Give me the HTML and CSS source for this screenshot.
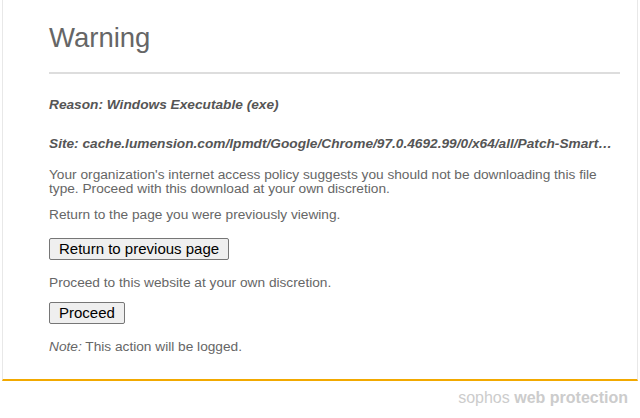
FILE: index.html
```html
<!DOCTYPE html>
<html lang="en">
<head>
    <meta charset="UTF-8">
    <title>Warning</title>
    <link rel="stylesheet" href="styles.css">
</head>
<body>
    <div class="panel">
        <h1>Warning</h1>
        <hr>
        <p class="detail">Reason: Windows Executable (exe)</p>
        <p class="detail site">Site: cache.lumension.com/lpmdt/Google/Chrome/97.0.4692.99/0/x64/all/Patch-SmartChromeUpdate.exe</p>
        <p class="policy">Your organization's internet access policy suggests you should not be downloading this file type. Proceed with this download at your own discretion.</p>
        <p>Return to the page you were previously viewing.</p>
        <button>Return to previous page</button>
        <p class="lead">Proceed to this website at your own discretion.</p>
        <button>Proceed</button>
        <p class="note"><em>Note:</em> This action will be logged.</p>
    </div>
    <div class="footer">sophos <b>web protection</b></div>
</body>
</html>
```

FILE: styles.css
```css
body {
    margin: 0 2px;
    font-family: "Liberation Sans", Arial, sans-serif;
    background-color: #fff;
    color: #666;
}
.panel {
    border: 1px solid #e8e8e8;
    border-top: none;
    border-bottom: 2px solid #f2a900;
    padding: 22px 17px 25px 46px;
}
h1 {
    font-size: 27.5px;
    line-height: 32px;
    font-weight: normal;
    color: #666;
    margin: 0;
}
hr {
    border: none;
    border-top: 2px solid #ddd;
    margin: 18px 0 24px;
}
p {
    font-size: 13.7px;
    line-height: 14px;
    margin: 0 0 16px;
}
.detail {
    font-weight: bold;
    font-style: italic;
    color: #555;
    margin-bottom: 25px;
}
.site {
    white-space: nowrap;
    overflow: hidden;
    text-overflow: ellipsis;
    margin-bottom: 17px;
}
.policy {
    margin-bottom: 12px;
}
.lead {
    margin-bottom: 12px;
}
button {
    display: block;
    font-family: "Liberation Sans", Arial, sans-serif;
    font-size: 15px;
    line-height: 18px;
    color: #000;
    background-color: #efefef;
    border: 1px solid #767676;
    border-radius: 2px;
    padding: 1px 9px;
    margin: 0 0 16px;
}
.note {
    margin: 14px 0 0;
}
.footer {
    text-align: right;
    padding: 8px 10px 0;
    font-size: 16px;
    line-height: 17px;
    color: #ccc;
}
```
